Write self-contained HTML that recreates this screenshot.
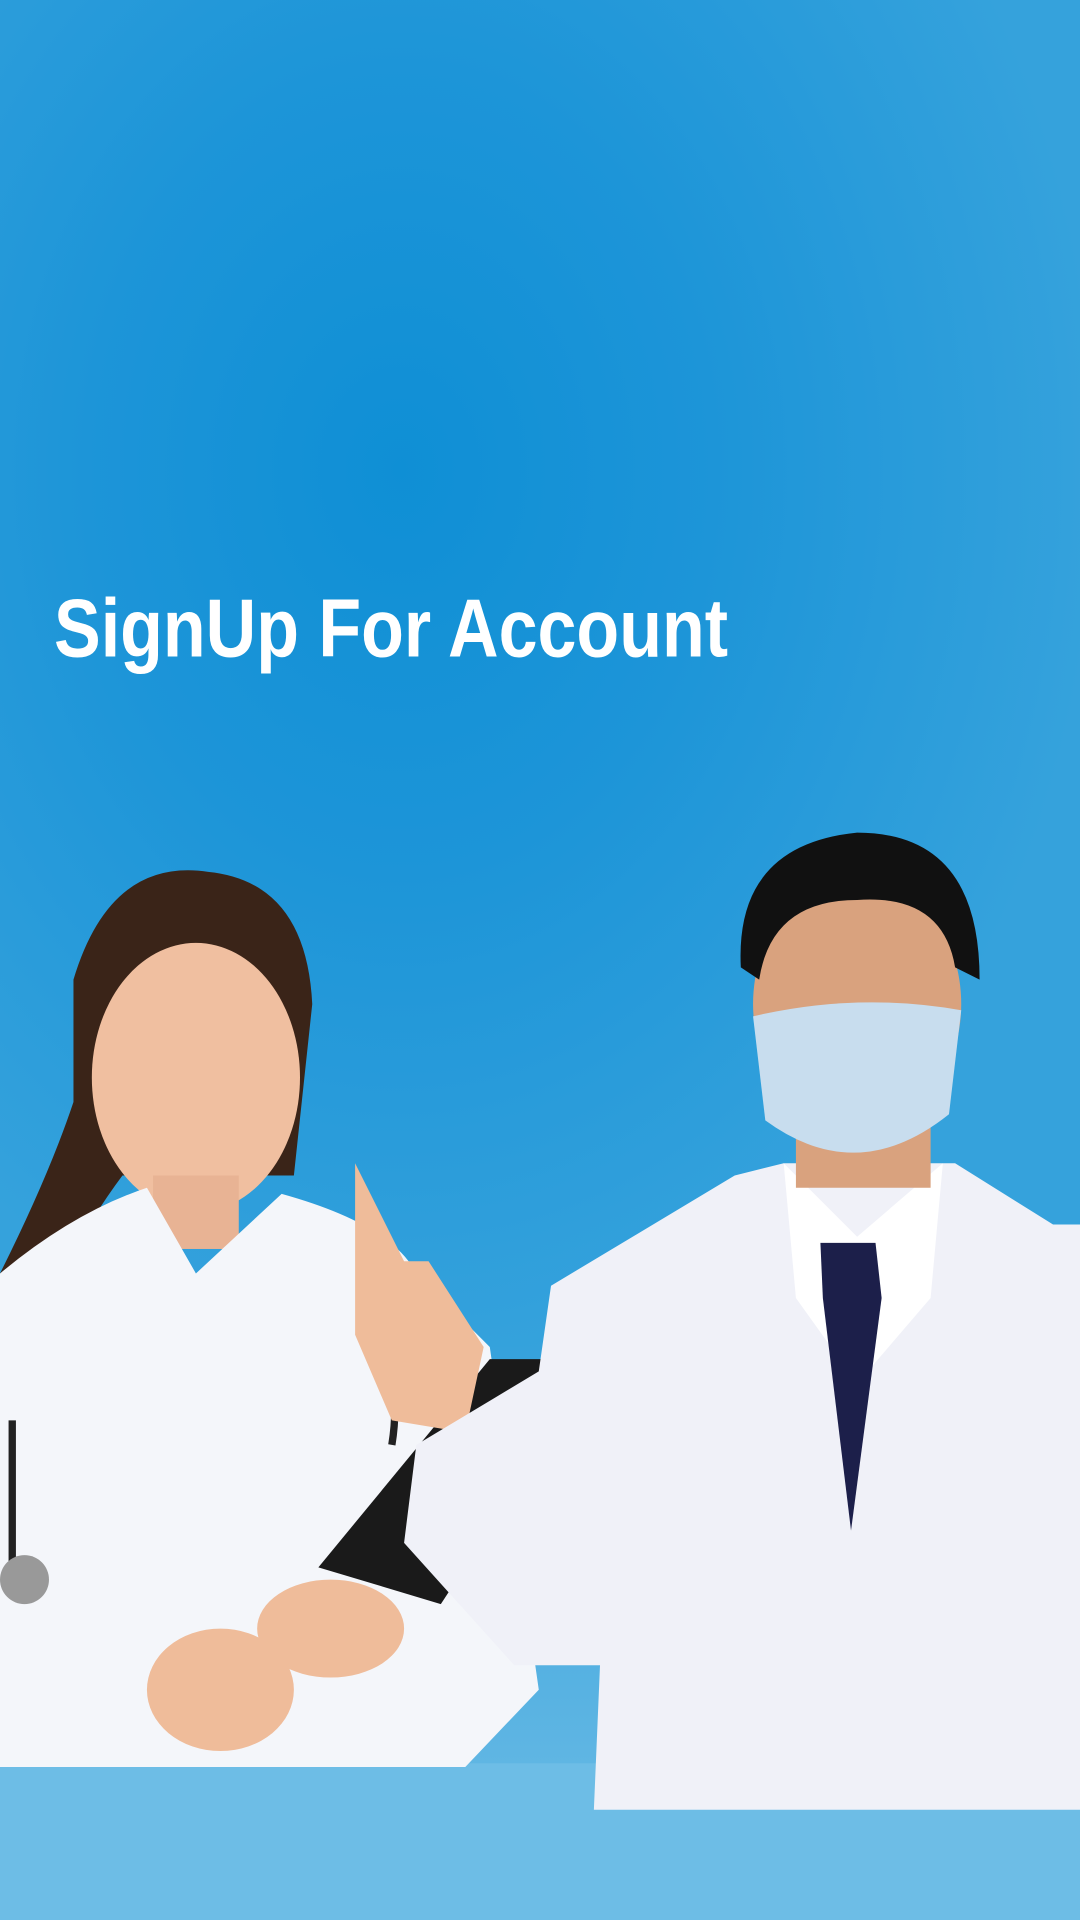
<!DOCTYPE html>
<html><head><meta charset="utf-8"><style>
html,body{margin:0;padding:0}
body{width:1080px;height:1920px;overflow:hidden;position:relative;
background:radial-gradient(ellipse 700px 900px at 400px 470px,#0f8fd5 0%,#1d95d8 45%,#35a2dc 100%);}
.t{position:absolute;left:54px;top:581px;font:bold 70px "Liberation Sans",sans-serif;color:#fff;letter-spacing:0px;transform:scaleY(1.18);transform-origin:0 0}
svg{position:absolute;left:0;top:0}
</style></head><body>
<svg width="1080" height="1920" viewBox="0 0 882 1568" preserveAspectRatio="none">
<defs>
<linearGradient id="bg2" x1="0" y1="0" x2="0" y2="1"><stop offset="0" stop-color="#35a2dc"/><stop offset="1" stop-color="#6fbde6"/></linearGradient>
</defs>
<rect x="0" y="1100" width="882" height="468" fill="url(#bg2)"/>
<rect x="0" y="1440" width="882" height="128" fill="#6dbde6"/>
<path d="M60 800 Q90 700 170 712 Q250 720 255 820 L240 960 L100 960 Q70 1000 40 1060 Q0 1140 40 1175 L0 1170 L0 1040 Q40 960 60 900 Z" fill="#3a2418"/>
<ellipse cx="160" cy="880" rx="85" ry="110" fill="#f0bfa0"/>
<rect x="125" y="960" width="70" height="60" fill="#e8b394"/>
<path d="M0 1040 Q60 990 120 970 L160 1040 L230 975 Q320 1000 340 1040 L400 1100 L440 1380 L380 1443 L0 1443 Z" fill="#f4f6fa"/>
<path d="M10 1160 L10 1290 M300 1040 Q330 1120 320 1180" stroke="#222" stroke-width="6" fill="none"/>
<circle cx="20" cy="1290" r="20" fill="#999"/>
<path d="M260 1280 L400 1110 L445 1110 L445 1180 L360 1310 Z" fill="#1a1a1a"/>
<ellipse cx="180" cy="1380" rx="60" ry="50" fill="#efbc9a"/>
<ellipse cx="270" cy="1330" rx="60" ry="40" fill="#efbc9a"/>
<path d="M290 950 L330 1030 L350 1030 L395 1100 L380 1170 L320 1160 L290 1090 Z" fill="#efbc9a"/>
<path d="M340 1180 L440 1120 L450 1050 L600 960 L640 950 L780 950 L860 1000 L882 1000 L882 1478 L485 1478 L490 1360 L420 1360 L330 1260 Z" fill="#f0f1f8"/>
<path d="M640 950 L700 1010 L770 950 L760 1060 L700 1130 L650 1060 Z" fill="#fff"/>
<path d="M670 1015 L715 1015 L720 1060 L695 1250 L672 1060 Z" fill="#1c1f4a"/>
<rect x="650" y="880" width="110" height="90" fill="#d9a27e"/>
<ellipse cx="700" cy="820" rx="85" ry="105" fill="#d9a27e"/>
<path d="M605 790 Q600 690 700 680 Q800 680 800 800 L780 790 Q770 730 700 735 Q630 735 620 800 Z" fill="#111"/>
<path d="M615 830 Q700 810 785 825 L775 910 Q700 970 625 915 Z" fill="#c8ddee"/>
</svg>
<div class="t">SignUp For Account</div>
</body></html>
